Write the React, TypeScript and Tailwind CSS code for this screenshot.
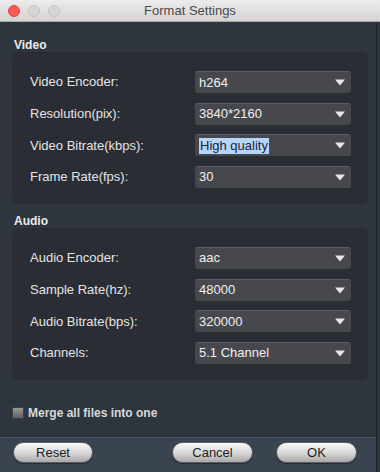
import React from "react";

interface Field {
  label: string;
  value: string;
  selected?: boolean;
}

const video: Field[] = [
  { label: "Video Encoder:", value: "h264" },
  { label: "Resolution(pix):", value: "3840*2160" },
  { label: "Video Bitrate(kbps):", value: "High quality", selected: true },
  { label: "Frame Rate(fps):", value: "30" },
];

const audio: Field[] = [
  { label: "Audio Encoder:", value: "aac" },
  { label: "Sample Rate(hz):", value: "48000" },
  { label: "Audio Bitrate(bps):", value: "320000" },
  { label: "Channels:", value: "5.1 Channel" },
];

function Select({ value, selected }: { value: string; selected?: boolean }) {
  return (
    <div className="flex h-[22px] w-[156px] items-center justify-between rounded-[3px] border-t border-[#5b5d62] bg-[#46484d] pl-[4px] pr-[6px] text-[13px]">
      {selected ? (
        <span className="bg-[#b5d5fd] px-[1px] leading-[16px] text-[#1b2433]">{value}</span>
      ) : (
        <span className="leading-[16px] text-[#f0f0f0]">{value}</span>
      )}
      <svg width="10" height="7" viewBox="0 0 10 7">
        <path d="M0 0.5 L10 0.5 L5 6.5 Z" fill="#e6e6e6" />
      </svg>
    </div>
  );
}

function Section({ title, fields }: { title: string; fields: Field[] }) {
  return (
    <div>
      <div className="h-[13px] pl-[2px] text-[12px] font-bold leading-[13px] text-[#ececec]">{title}</div>
      <div className="flex flex-col gap-[9.67px] rounded-[6px] bg-[#2a2e34] pb-[16px] pl-[18px] pr-[17px] pt-[19px]">
        {fields.map(f => (
          <div key={f.label} className="flex items-center justify-between">
            <span className="text-[13px] text-[#e4e4e4]">{f.label}</span>
            <Select value={f.value} selected={f.selected} />
          </div>
        ))}
      </div>
    </div>
  );
}

function Button({ children, width }: { children: React.ReactNode; width: string }) {
  return (
    <button
      className={`${width} h-[21px] rounded-full border border-[#5c5f63] bg-gradient-to-b from-[#fbfbfb] via-[#d9d9d9] to-[#a9a9a9] text-[13px] leading-[19px] text-[#1e1e1e] shadow-[0_1px_1px_rgba(0,0,0,0.4)]`}
    >
      {children}
    </button>
  );
}

export default function App() {
  return (
    <div
      className="flex h-[472px] w-[380px] flex-col overflow-hidden bg-[#2f353d]"
      style={{ fontFamily: '"Liberation Sans", Arial, sans-serif' }}
    >
      <div className="relative flex h-[22px] shrink-0 items-center border-b border-[#a9a9a9] bg-gradient-to-b from-[#ececec] to-[#d4d4d4]">
        <div className="flex gap-[8px] pl-[8px]">
          <span className="h-[12px] w-[12px] rounded-full border border-[#e0443e] bg-[#fc5b57]" />
          <span className="h-[12px] w-[12px] rounded-full border border-[#c4c4c4] bg-[#d6d6d6]" />
          <span className="h-[12px] w-[12px] rounded-full border border-[#c4c4c4] bg-[#d6d6d6]" />
        </div>
        <div className="absolute inset-0 flex items-center justify-center text-[13px] text-[#4b4b4b]">
          Format Settings
        </div>
      </div>

      <div className="flex flex-1 border-r-[3px] border-[#2f353d]">
        <div className="flex flex-1 flex-col border-r border-[#20252b]">
          <div className="flex flex-1 flex-col pl-[12px] pr-[8px] pt-[17px]">
            <Section title="Video" fields={video} />
            <div className="mt-[11px]">
              <Section title="Audio" fields={audio} />
            </div>
            <div className="mt-[24px] flex items-center gap-[4px]">
              <span className="h-[12px] w-[12px] border border-[#3d3f43] bg-gradient-to-b from-[#9a9a9a] to-[#5e5e5e]" />
              <span className="text-[12px] font-bold text-[#d9d9d9]">Merge all files into one</span>
            </div>
          </div>

          <div className="flex h-[35px] shrink-0 items-start border-t border-[#4a5561] bg-[#3a4450] pl-[13px] pr-[19px] pt-[4px]">
            <Button width="w-[80px]">Reset</Button>
            <div className="flex-1" />
            <Button width="w-[81px]">Cancel</Button>
            <div className="w-[23px]" />
            <Button width="w-[81px]">OK</Button>
          </div>
        </div>
      </div>
    </div>
  );
}
